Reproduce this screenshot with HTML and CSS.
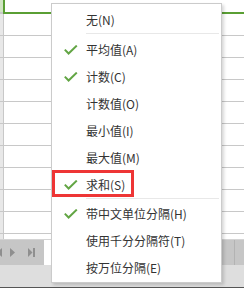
FILE: index.html
```html
<!DOCTYPE html>
<html lang="zh-CN">
<head>
<meta charset="utf-8">
<title>状态栏统计菜单</title>
<link rel="stylesheet" href="styles.css">
</head>
<body>
<div class="sheet">
  <div class="row row-sel"><div class="hdr hdr-sel"></div><div class="cell cell-sel"></div></div>
  <div class="row"><div class="hdr"></div><div class="cell"></div></div>
  <div class="row"><div class="hdr"></div><div class="cell"></div></div>
  <div class="row"><div class="hdr"></div><div class="cell"></div></div>
  <div class="row"><div class="hdr"></div><div class="cell"></div></div>
  <div class="row"><div class="hdr"></div><div class="cell"></div></div>
  <div class="row"><div class="hdr"></div><div class="cell"></div></div>
  <div class="row"><div class="hdr"></div><div class="cell"></div></div>
  <div class="row"><div class="hdr"></div><div class="cell"></div></div>
  <div class="row"><div class="hdr"></div><div class="cell"></div></div>
  <div class="row"><div class="hdr"></div><div class="cell"></div></div>
  <div class="row row-last"><div class="hdr"></div><div class="cell"></div></div>
  <div class="tabbar">
    <div class="nav">
      <svg class="nav-icons" width="44" height="25" viewBox="0 0 44 25">
        <polygon points="-3,12.5 2,8 2,17" fill="#8f8f8f"/>
        <polygon points="10,8 15,12.5 10,17" fill="#8f8f8f"/>
        <polygon points="28,8 32.5,12.5 28,17" fill="#8f8f8f"/>
        <rect x="33" y="8" width="2" height="9" fill="#8f8f8f"/>
      </svg>
    </div>
    <div class="tab"></div>
    <div class="tab-rest"><div class="tab-sep"></div></div>
  </div>
  <div class="status"></div>
</div>

<div class="menu">
  <div class="item"><span class="label">无(N)</span></div>
  <div class="sep"></div>
  <div class="item"><svg class="check" width="14" height="10" viewBox="0 0 14 10"><path d="M0.8 4.6 L4.6 8.5 L12.8 0.6" fill="none" stroke="#62a544" stroke-width="2"/></svg><span class="label">平均值(A)</span></div>
  <div class="item"><svg class="check" width="14" height="10" viewBox="0 0 14 10"><path d="M0.8 4.6 L4.6 8.5 L12.8 0.6" fill="none" stroke="#62a544" stroke-width="2"/></svg><span class="label">计数(C)</span></div>
  <div class="item"><span class="label">计数值(O)</span></div>
  <div class="item"><span class="label">最小值(I)</span></div>
  <div class="item"><span class="label">最大值(M)</span></div>
  <div class="item item-hl"><svg class="check" width="14" height="10" viewBox="0 0 14 10"><path d="M0.8 4.6 L4.6 8.5 L12.8 0.6" fill="none" stroke="#62a544" stroke-width="2"/></svg><span class="label">求和(S)</span><div class="hl-box"></div></div>
  <div class="sep sep-2"></div>
  <div class="item"><svg class="check" width="14" height="10" viewBox="0 0 14 10"><path d="M0.8 4.6 L4.6 8.5 L12.8 0.6" fill="none" stroke="#62a544" stroke-width="2"/></svg><span class="label">带中文单位分隔(H)</span></div>
  <div class="item"><span class="label">使用千分分隔符(T)</span></div>
  <div class="item"><span class="label">按万位分隔(E)</span></div>
</div>
</body>
</html>
```

FILE: styles.css
```css
html, body {
  margin: 0;
  padding: 0;
  background: #ffffff;
}

body {
  width: 244px;
  height: 288px;
  overflow: hidden;
  position: relative;
  font-family: "Noto Sans CJK SC", "Noto Sans", sans-serif;
}

.sheet {
  display: flex;
  flex-direction: column;
  width: 244px;
  height: 288px;
}

.row {
  display: flex;
  height: 22px;
  box-sizing: border-box;
  border-bottom: 1px solid #c8c8c8;
}

.hdr {
  width: 3px;
  background: #e8e8e8;
  border-right: 1px solid #c8c8c8;
}

.cell {
  flex: 1;
}

.row-sel {
  height: 14px;
  border-bottom: none;
}

.hdr-sel {
  background: #d2e5c4;
  border-right: none;
  border-bottom: 2px solid #c8c8c8;
}

.cell-sel {
  border-left: 2px solid #5a9f34;
  border-bottom: 2px solid #5a9f34;
}

.row-last {
  height: 6px;
  border-bottom: 1px solid #d4d4d4;
}

.tabbar {
  display: flex;
  height: 25px;
}

.nav {
  width: 44px;
  background: #c6c6c6;
}

.nav-icons {
  display: block;
}

.tab {
  width: 100px;
  background: #ffffff;
}

.tab-rest {
  flex: 1;
  background: #c6c6c6;
  display: flex;
  justify-content: flex-end;
}

.tab-sep {
  width: 1px;
  background: #b3b3b3;
  margin-right: 9px;
}

.status {
  height: 23px;
  box-sizing: border-box;
  background: #dedede;
  border-bottom: 1px solid #555555;
}

.menu {
  position: absolute;
  left: 51px;
  top: 3px;
  width: 171px;
  height: 280px;
  box-sizing: border-box;
  background: #ffffff;
  border: 1px solid #cbcbcb;
  box-shadow: 2px 2px 3px rgba(0, 0, 0, 0.16);
  padding-top: 2px;
}

.item {
  position: relative;
  height: 27px;
  display: flex;
  align-items: center;
  padding-left: 34px;
  font-size: 12px;
  color: #333333;
}

.check {
  position: absolute;
  left: 12px;
  top: 9px;
}

.label {
  white-space: nowrap;
}

.sep {
  height: 1px;
  background: #e8e8e8;
  margin: 0 2px 2px 34px;
}

.sep-2 {
  margin-bottom: 1px;
}

.hl-box {
  position: absolute;
  left: 0;
  top: -1px;
  width: 82px;
  height: 27px;
  box-sizing: border-box;
  border: 3px solid #ee3535;
}
```
